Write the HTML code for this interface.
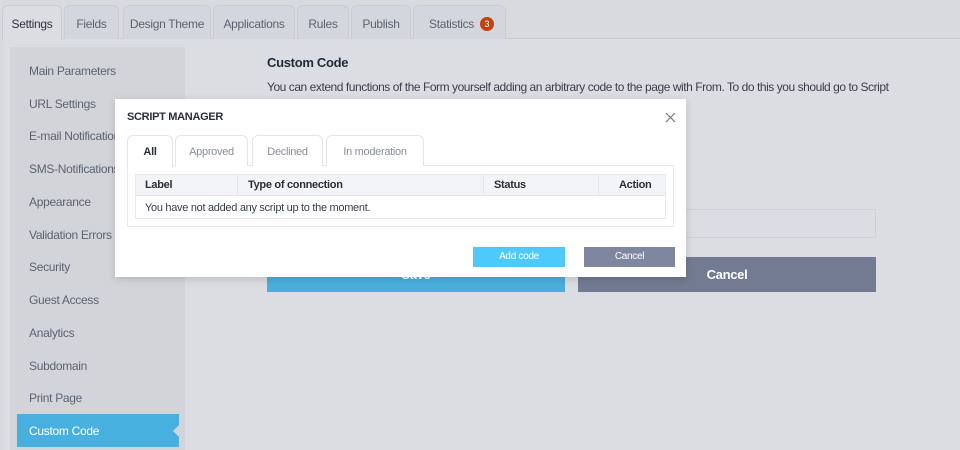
<!DOCTYPE html>
<html><head><meta charset="utf-8"><style>
*{box-sizing:border-box;margin:0;padding:0}
body{width:960px;height:450px;overflow:hidden;background:#d8dade;font-family:"Liberation Sans",sans-serif;position:relative;font-size:12px;color:#3a3f4a;letter-spacing:-0.3px}
.abs{position:absolute}
.tab{position:absolute;top:5px;height:34px;background:#d3d6dc;border:1px solid #c9ccd3;border-bottom:none;border-radius:6px 6px 0 0;color:#5c6370;font-size:12px;text-align:center;line-height:36px}
.panel{position:absolute;left:4px;top:38px;width:956px;height:412px;background:#dcdde2;border-top:1px solid #c9ccd3}
.side{position:absolute;left:10px;top:47px;width:175px;height:403px;background:#d2d4da}
.si{position:absolute;left:29px;color:#5c6370;font-size:12px}
.mtab{position:absolute;top:135px;height:31px;border:1px solid #e3e5ea;border-bottom:none;border-radius:6px 6px 0 0;background:#fff;color:#8a909b;font-size:11px;text-align:center;line-height:33px}
</style></head><body>
<div class="panel"></div>
<div class="tab" style="left:2px;width:60px;background:#dcdde2;color:#2f3440;height:35px">Settings</div>
<div class="tab" style="left:64px;width:55px">Fields</div>
<div class="tab" style="left:123px;width:88px">Design Theme</div>
<div class="tab" style="left:213px;width:82px">Applications</div>
<div class="tab" style="left:297px;width:52px">Rules</div>
<div class="tab" style="left:351px;width:60px">Publish</div>
<div class="tab" style="left:413px;width:93px;text-align:left;padding-left:15px">Statistics <span style="display:inline-block;width:14px;height:14px;border-radius:7px;background:#c8400e;color:#fff;font-size:9px;line-height:14px;text-align:center;vertical-align:1px;margin-left:3px;letter-spacing:0">3</span></div>
<div class="side"></div>
<div class="si" style="top:64px">Main Parameters</div>
<div class="si" style="top:97px">URL Settings</div>
<div class="si" style="top:129px">E-mail Notifications</div>
<div class="si" style="top:162px">SMS-Notifications</div>
<div class="si" style="top:195px">Appearance</div>
<div class="si" style="top:228px">Validation Errors</div>
<div class="si" style="top:260px">Security</div>
<div class="si" style="top:293px">Guest Access</div>
<div class="si" style="top:326px">Analytics</div>
<div class="si" style="top:359px">Subdomain</div>
<div class="si" style="top:391px">Print Page</div>
<div class="abs" style="left:17px;top:414px;width:162px;height:33px;background:#48b0df;color:#fff;padding:10px 12px">Custom Code</div>
<div class="abs" style="left:173px;top:425px;width:0;height:0;border:6px solid transparent;border-right-color:#d2d4da;border-left:none"></div>
<div class="abs" style="left:267px;top:55px;font-weight:bold;font-size:13px;color:#1f2a3a">Custom Code</div>
<div class="abs" style="left:267px;top:79px;font-size:12px;color:#3a3f4a;width:640px;line-height:17px;letter-spacing:-0.45px">You can extend functions of the Form yourself adding an arbitrary code to the page with From. To do this you should go to Script Manager and add your code to the page using script.</div>
<div class="abs" style="left:578px;top:209px;width:298px;height:29px;border:1px solid #cdd0d6;background:#dcdde2"></div>
<div class="abs" style="left:267px;top:257px;width:298px;height:35px;background:#4aaedb;color:#fff;text-align:center;line-height:35px;font-weight:bold;font-size:13px">Save</div>
<div class="abs" style="left:578px;top:257px;width:298px;height:35px;background:#727b91;color:#fff;text-align:center;line-height:35px;font-weight:bold;font-size:13px">Cancel</div>

<div class="abs" style="left:115px;top:99px;width:571px;height:178px;background:#fff;box-shadow:0 2px 8px rgba(0,0,0,.15)"></div>
<div class="abs" style="left:127px;top:111px;font-weight:bold;font-size:11px;color:#2a2f3a">SCRIPT MANAGER</div>
<svg class="abs" style="left:665px;top:112px" width="11" height="11"><path d="M1 1L10 10M10 1L1 10" stroke="#777" stroke-width="1.2"/></svg>
<div class="abs" style="left:127px;top:165px;width:547px;height:62px;border:1px solid #e6e8ec"></div>
<div class="mtab" style="left:127px;width:46px;color:#2a2f3a;font-weight:bold;height:32px">All</div>
<div class="mtab" style="left:175px;width:73px">Approved</div>
<div class="mtab" style="left:252px;width:71px">Declined</div>
<div class="mtab" style="left:326px;width:98px">In moderation</div>
<div class="abs" style="left:135px;top:174px;width:531px;height:45px;border:1px solid #e6e8ec"></div>
<div class="abs" style="left:136px;top:175px;width:529px;height:21px;background:#f3f4f7;border-bottom:1px solid #e3e5ea;font-weight:bold;font-size:11px;color:#2a2f3a;line-height:21px">
<span class="abs" style="left:9px">Label</span>
<span class="abs" style="left:101px;top:0;height:21px;border-left:1px solid #e3e5ea;padding-left:10px">Type of connection</span>
<span class="abs" style="left:347px;top:0;height:21px;border-left:1px solid #e3e5ea;padding-left:10px">Status</span>
<span class="abs" style="left:462px;top:0;height:21px;width:67px;border-left:1px solid #e3e5ea;padding-left:20px">Action</span>
</div>
<div class="abs" style="left:145px;top:202px;font-size:11px;color:#3a3f4a">You have not added any script up to the moment.</div>
<div class="abs" style="left:473px;top:247px;width:92px;height:20px;background:#4dc9fb;color:#fff;text-align:center;line-height:20px;font-size:10px">Add code</div>
<div class="abs" style="left:584px;top:247px;width:91px;height:20px;background:#7e879f;color:#fff;text-align:center;line-height:20px;font-size:10px">Cancel</div>
</body></html>
